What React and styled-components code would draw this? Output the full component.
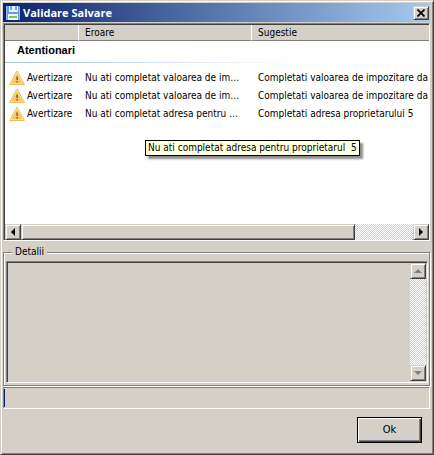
import React, { useState } from 'react'
import styled, { createGlobalStyle, css } from 'styled-components'

const warnings = [
    {
        id: 1,
        error: 'Nu ati completat valoarea de impozitare',
        hint: 'Completati valoarea de impozitare da',
    },
    {
        id: 2,
        error: 'Nu ati completat valoarea de impozitare',
        hint: 'Completati valoarea de impozitare da',
    },
    {
        id: 3,
        error: 'Nu ati completat adresa pentru proprietarul  5',
        hint: 'Completati adresa proprietarului 5',
    },
]

function DiskIcon() {
    return (
        <svg width="16" height="16" viewBox="0 0 16 16" aria-hidden="true">
            <path d="M1 1h13l1 1v13H1z" fill="#62a0e6" />
            <path d="M1 1h1v14H1zM14 2h1v13h-1z" fill="#8fc0f4" />
            <path d="M4 1h9v6H4z" fill="#e6f1fc" />
            <path d="M5 1h2v4H5zM10 1h2v4h-2z" fill="#6fa8e4" />
            <path d="M3 9h10v6H3z" fill="#f4faf2" />
            <path d="M4 11h8v2H4z" fill="#7cc466" />
        </svg>
    )
}

function WarningIcon() {
    return (
        <svg width="16" height="16" viewBox="0 0 16 16" aria-hidden="true">
            <path d="M8 1 15.3 14.5H0.7z" fill="#fdeab8" stroke="#ecba58" strokeLinejoin="round" />
            <path d="M8 4 13 13H3z" fill="#f9c864" stroke="#f3b84c" strokeWidth="0.5" />
            <path d="M7.3 6.5h1.6v3.6H7.3zM7.3 11h1.6v1.4H7.3z" fill="#94651f" />
        </svg>
    )
}

function Arrow({ points, color = '#000' }) {
    return (
        <svg width="8" height="8" viewBox="0 0 8 8" aria-hidden="true">
            <polygon points={points} fill={color} />
        </svg>
    )
}

function App() {
    const [details, setDetails] = useState('')

    return (
        <>
            <GlobalStyle />
            <Window>
                <TitleBar>
                    <DiskIcon />
                    <Title>Validare Salvare</Title>
                    <CloseButton type="button" aria-label="Inchide">
                        <svg width="8" height="8" viewBox="0 0 8 8" aria-hidden="true">
                            <path d="M0.5 0.5 7.5 7.5M7.5 0.5 0.5 7.5" stroke="#000" strokeWidth="1.7" />
                        </svg>
                    </CloseButton>
                </TitleBar>

                <ListView>
                    <ListBody>
                        <Table>
                            <colgroup>
                                <Column $width="74px" />
                                <Column $width="173px" />
                                <Column />
                            </colgroup>
                            <thead>
                                <tr>
                                    <HeadCell aria-label="Tip" />
                                    <HeadCell>Eroare</HeadCell>
                                    <HeadCell $last>Sugestie</HeadCell>
                                </tr>
                            </thead>
                            <tbody>
                                <tr>
                                    <GroupCell colSpan="3">Atentionari</GroupCell>
                                </tr>
                                {warnings.map((item) => (
                                    <tr key={item.id}>
                                        <IconCell>
                                            <Kind>
                                                <WarningIcon />
                                                Avertizare
                                            </Kind>
                                        </IconCell>
                                        <Cell $ellipsis>{item.error}</Cell>
                                        <Cell $last>{item.hint}</Cell>
                                    </tr>
                                ))}
                            </tbody>
                        </Table>
                        <Tooltip role="tooltip">Nu ati completat adresa pentru proprietarul  5</Tooltip>
                    </ListBody>
                    <HorizontalBar>
                        <ScrollButton type="button" aria-label="Stanga">
                            <Arrow points="6,0 6,8 2,4" />
                        </ScrollButton>
                        <Thumb />
                        <ScrollButton type="button" aria-label="Dreapta">
                            <Arrow points="2,0 2,8 6,4" />
                        </ScrollButton>
                    </HorizontalBar>
                </ListView>

                <Group>
                    <Legend>
                        <label htmlFor="details">Detalii</label>
                    </Legend>
                    <DetailsBox>
                        <DetailsText
                            id="details"
                            value={details}
                            onChange={(e) => setDetails(e.target.value)}
                        />
                        <VerticalBar>
                            <ScrollButton type="button" aria-label="Sus">
                                <Arrow points="0,6 8,6 4,2" color="#808080" />
                            </ScrollButton>
                            <ScrollButton type="button" aria-label="Jos">
                                <Arrow points="0,2 8,2 4,6" color="#808080" />
                            </ScrollButton>
                        </VerticalBar>
                    </DetailsBox>
                </Group>

                <Progress role="progressbar" aria-label="Progres" aria-valuenow={0}>
                    <ProgressFill />
                </Progress>

                <Footer>
                    <OkButton type="button">Ok</OkButton>
                </Footer>
            </Window>
        </>
    )
}

export default App

const face = '#d4d0c8'
const shadow = '#808080'
const dark = '#404040'

const raised = css`
    border: 1px solid;
    border-color: ${face} ${dark} ${dark} ${face};
    box-shadow: inset 1px 1px #fff, inset -1px -1px ${shadow};
`

const GlobalStyle = createGlobalStyle`
    * {
        box-sizing: border-box;
    }

    body {
        margin: 0;
        background: ${face};
    }

    body, button, textarea {
        font-family: "DejaVu Sans Condensed", "Liberation Sans", sans-serif;
        font-size: 10px;
        line-height: 14px;
        color: #000;
    }
`

const Window = styled.main`
    ${raised}
    display: flex;
    flex-direction: column;
    min-height: 100vh;
    padding: 2px 3px 2px 2px;
    background: ${face};
`

const TitleBar = styled.header`
    display: flex;
    align-items: center;
    gap: 2px;
    height: 19px;
    padding: 0 1px 0 2px;
    background: linear-gradient(to right, #0a246a, #a6caf0);
`

const Title = styled.h1`
    flex: 1;
    margin: 0;
    font-family: "Open Sans", sans-serif;
    font-size: 11px;
    font-weight: 700;
    line-height: 16px;
    color: #fff;
`

const CloseButton = styled.button`
    ${raised}
    display: flex;
    align-items: center;
    justify-content: center;
    width: 16px;
    height: 14px;
    padding: 0;
    background: ${face};
`

const ListView = styled.section`
    display: flex;
    flex: 1;
    flex-direction: column;
    margin-top: 1px;
    border: 1px solid;
    border-color: ${shadow} #fff #fff ${shadow};
    box-shadow: inset 1px 1px ${dark};
    padding: 1px 0 0 1px;
`

const ListBody = styled.div`
    position: relative;
    flex: 1;
    overflow: hidden;
    background: #fff;
`

const Table = styled.table`
    width: 100%;
    table-layout: fixed;
    border-collapse: separate;
    border-spacing: 0;
`

const Column = styled.col`
    width: ${(props) => props.$width || 'auto'};
`

const HeadCell = styled.th`
    height: 16px;
    padding: 1px 6px 0;
    border-right: ${(props) => (props.$last ? 'none' : '1px solid #fff')};
    border-bottom: 1px solid ${shadow};
    background: ${face};
    font-weight: 400;
    line-height: 14px;
    text-align: left;
`

const GroupCell = styled.td`
    height: 28px;
    padding: 0 12px 10px;
    background: linear-gradient(to right, #a9c0e0, #fff 290px) 0 21px / 100% 1px no-repeat;
    font-family: "Liberation Sans", sans-serif;
    font-size: 11px;
    font-weight: 700;
    line-height: 18px;
`

const Cell = styled.td`
    height: 18px;
    padding: ${(props) => (props.$last ? '0 0 0 6px' : '0 9px 0 6px')};
    overflow: hidden;
    text-overflow: ${(props) => (props.$ellipsis ? 'ellipsis' : 'clip')};
    white-space: nowrap;
`

const IconCell = styled(Cell)`
    padding: 0 0 0 4px;
`

const Kind = styled.div`
    display: flex;
    align-items: center;
    gap: 2px;
`

const Tooltip = styled.div`
    position: absolute;
    top: 115px;
    left: 140px;
    padding: 0 2px;
    border: 1px solid #000;
    background: #ffffe1;
    box-shadow: 3px 3px 2px rgba(0, 0, 0, 0.45);
    white-space: pre;
`

const dither = css`
    background: repeating-conic-gradient(#fff 0 25%, ${face} 0 50%) 0 0 / 2px 2px;
`

const HorizontalBar = styled.div`
    ${dither}
    display: flex;
    height: 16px;
`

const VerticalBar = styled.div`
    ${dither}
    display: flex;
    flex-direction: column;
    justify-content: space-between;
    width: 16px;
`

const ScrollButton = styled.button`
    ${raised}
    display: flex;
    flex-shrink: 0;
    align-items: center;
    justify-content: center;
    width: 16px;
    height: 16px;
    padding: 0;
    background: ${face};
`

const Thumb = styled.div`
    ${raised}
    flex: 1;
    margin-right: 58px;
    background: ${face};
`

const Group = styled.fieldset`
    min-width: 0;
    margin: 4px 0 1px;
    padding: 2px 1px 2px 2px;
    border: 1px solid ${shadow};
    box-shadow: 1px 1px #fff, inset 1px 1px #fff;
`

const Legend = styled.legend`
    margin-left: 6px;
    padding: 0 3px;
    background: ${face};
`

const DetailsBox = styled.div`
    display: flex;
    height: 122px;
    padding: 1px;
    border: 1px solid;
    border-color: ${shadow} #fff #fff ${shadow};
    box-shadow: inset 1px 1px ${dark};
`

const DetailsText = styled.textarea`
    flex: 1;
    min-width: 0;
    padding: 2px;
    border: none;
    outline: none;
    background: ${face};
    resize: none;
`

const Progress = styled.div`
    height: 22px;
    padding: 1px 0;
    border: 1px solid;
    border-color: ${shadow} #fff #fff ${shadow};
`

const ProgressFill = styled.div`
    width: 1px;
    height: 100%;
    background: #0a246a;
`

const Footer = styled.footer`
    display: flex;
    justify-content: flex-end;
    padding: 8px 8px 9px;
`

const OkButton = styled.button`
    width: 65px;
    height: 26px;
    padding: 0;
    border: 1px solid #000;
    background: ${face};
    box-shadow: inset 1px 1px #fff, inset -1px -1px ${dark}, inset -2px -2px ${shadow};
    font-size: 11px;
`
